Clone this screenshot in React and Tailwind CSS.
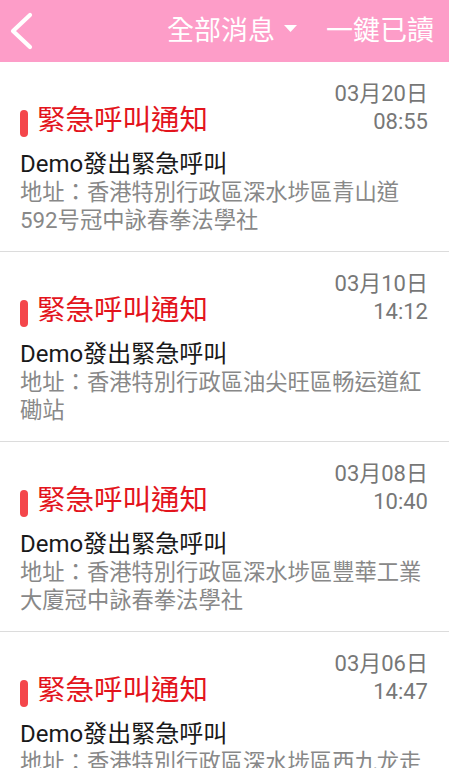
const messages = [
  {
    date: "03月20日",
    time: "08:55",
    who: "Demo發出緊急呼叫",
    addr: "地址：香港特別行政區深水埗區青山道592号冠中詠春拳法學社",
  },
  {
    date: "03月10日",
    time: "14:12",
    who: "Demo發出緊急呼叫",
    addr: "地址：香港特別行政區油尖旺區畅运道紅磡站",
  },
  {
    date: "03月08日",
    time: "10:40",
    who: "Demo發出緊急呼叫",
    addr: "地址：香港特別行政區深水埗區豐華工業大廈冠中詠春拳法學社",
  },
  {
    date: "03月06日",
    time: "14:47",
    who: "Demo發出緊急呼叫",
    addr: "地址：香港特別行政區深水埗區西九龙走廊",
  },
];

function MessageItem({ msg }) {
  return (
    <div className="border-b border-[#dcdcdc] pl-[20px] pr-[21px] pt-[18px] pb-[17px]">
      <div className="flex items-end justify-between">
        <div className="flex items-center h-[30px]">
          <span className="w-[8px] h-[27px] rounded-full bg-[#f4464b] mt-[4px]" />
          <span className="ml-[9px] text-[28.5px] leading-[30px] text-[#e3141c]">緊急呼叫通知</span>
        </div>
        <div className="text-right text-[22px] leading-[28px] text-[#777]">
          <p>{msg.date}</p>
          <p>{msg.time}</p>
        </div>
      </div>
      <p className="mt-[14px] text-[24px] leading-[28px] text-[#1a1a1a]">{msg.who}</p>
      <p className="text-[22.3px] leading-[28px] text-[#888]">{msg.addr}</p>
    </div>
  );
}

export default function App() {
  return (
    <div
      className="w-[449px] h-[768px] overflow-hidden bg-white"
      style={{ fontFamily: "Roboto, 'Noto Sans CJK TC', sans-serif" }}
    >
      {/* Top bar */}
      <header className="h-[62px] bg-[#fd9dc8] flex items-center text-white">
        <button className="ml-[8px] w-[26px] flex items-center justify-center">
          <svg width="26" height="38" viewBox="0 0 26 38" fill="none">
            <path d="M22 3 L5 19 L22 35" stroke="white" strokeWidth="4.2" strokeLinecap="round" strokeLinejoin="round" />
          </svg>
        </button>
        <div className="flex-1" />
        <div className="flex items-center text-[27px] leading-none">
          <span>全部消息</span>
          <svg width="13" height="7" viewBox="0 0 13 7" className="ml-[9px] mb-[5px]">
            <path d="M0 0 L13 0 L6.5 7 Z" fill="white" />
          </svg>
        </div>
        <span className="ml-[29px] mr-[15px] text-[27px] leading-none">一鍵已讀</span>
      </header>

      <div>
        {messages.map((msg, i) => (
          <MessageItem key={i} msg={msg} />
        ))}
      </div>
    </div>
  );
}
